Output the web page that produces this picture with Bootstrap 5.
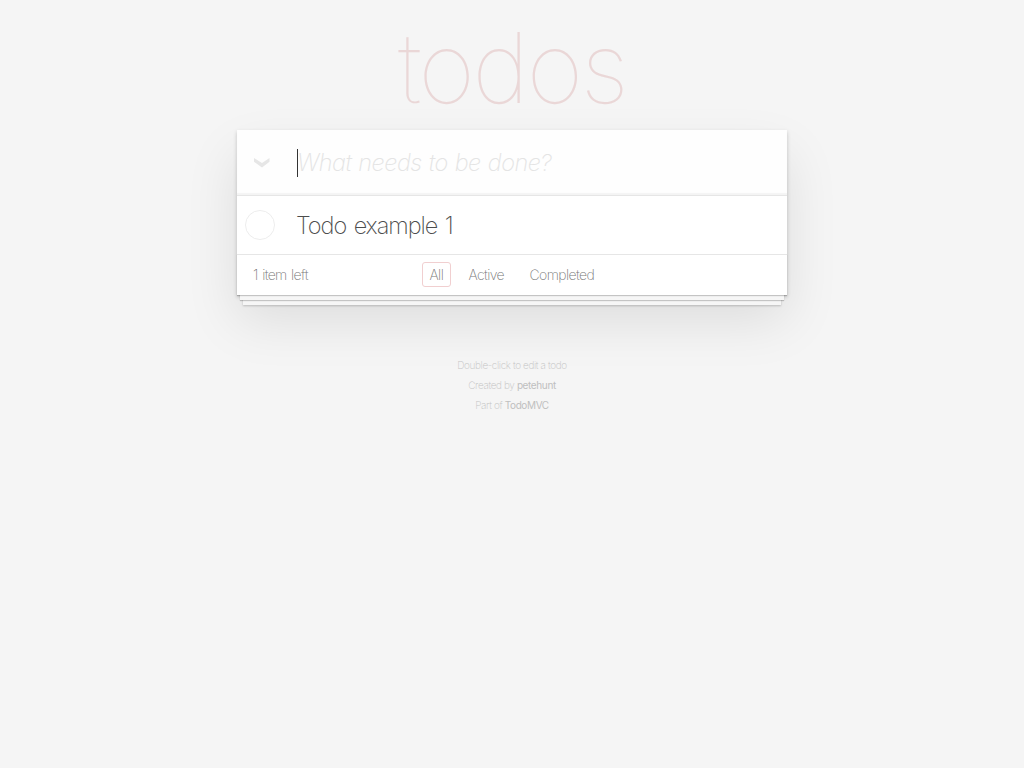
<!DOCTYPE html>
<html lang="en">
<head>
<meta charset="utf-8">
<meta name="viewport" content="width=device-width, initial-scale=1">
<title>todos</title>
<link href="https://cdn.jsdelivr.net/npm/bootstrap@5.3.0/dist/css/bootstrap.min.css" rel="stylesheet">
<style>
body{background:#f5f5f5;color:#4d4d4d;font-family:Inter,"Liberation Sans",sans-serif;font-weight:300;font-size:14px;line-height:1.4}
.todo-shell{width:550px}
.todo-title{height:130px;padding-top:3px;font-size:98px;line-height:130px;font-weight:100;color:#ead7d7;letter-spacing:-2.8px;white-space:nowrap}
.todo-app{box-shadow:0 2px 4px rgba(0,0,0,.2),0 25px 50px rgba(0,0,0,.1)}
.todo-new{height:65px;background:#fefefe;box-shadow:inset 0 -2px 1px rgba(0,0,0,.04)}
.todo-arrow{width:60px;padding-left:17px}
.todo-caret{width:1px;height:28px;margin-right:-1px;background:#333}
.todo-hint{font-size:23.5px;font-style:italic;font-weight:200;color:#e4e4e4;letter-spacing:-.5px;word-spacing:.9px;white-space:nowrap;padding-top:2px}
.todo-item{height:59px;border-top:1px solid #e6e6e6}
.todo-ring{width:60px;padding-left:8px}
.todo-label{font-size:23.5px;font-weight:200;letter-spacing:-1.05px;word-spacing:2px;margin-left:-1px;padding-top:3px}
.todo-foot{height:41px;padding:0 15px;border-top:1px solid #e6e6e6;color:#777;font-weight:200;background:#fff;box-shadow:0 1px 1px rgba(0,0,0,.2),0 8px 0 -3px #f6f6f6,0 9px 1px -3px rgba(0,0,0,.2),0 16px 0 -6px #f6f6f6,0 17px 2px -6px rgba(0,0,0,.2)}
.todo-count{width:169px;margin-left:1px;letter-spacing:-.65px;word-spacing:1.2px}
.todo-filters{gap:10px;margin-top:-2px}
.todo-filter{color:inherit;text-decoration:none;height:25px;line-height:24px;padding:0 6.5px;border:1px solid transparent;border-radius:3px;letter-spacing:-.6px}
.todo-filter.active{width:29px;border-color:#f1cfd0}
.todo-mid{width:51px}
.todo-info{margin-top:60px;font-size:10px;line-height:20px;color:#c4c4c4;font-weight:200;letter-spacing:-.38px}
.todo-info a{color:#bfbfbf;font-weight:400;text-decoration:none}
</style>
</head>
<body>
<main class="todo-shell mx-auto">
<h1 class="todo-title text-center mb-0">todos</h1>
<section class="todo-app bg-white">
<div class="todo-new d-flex align-items-center">
<div class="todo-arrow"><svg class="d-block" width="17" height="11" viewBox="0 0 17 11"><path d="M0 1 8 6 15.5 1V4.8L8 10.4 0 4.8Z" fill="#e6e6e6"/></svg></div>
<span class="todo-caret"></span><span class="todo-hint">What needs to be done?</span>
</div>
<div class="todo-item d-flex align-items-center">
<div class="todo-ring"><svg class="d-block" width="30" height="30"><circle cx="15" cy="15" r="14.5" fill="none" stroke="#ededed"/></svg></div>
<span class="todo-label">Todo example 1</span>
</div>
<footer class="todo-foot d-flex align-items-center position-relative">
<span class="todo-count">1 item left</span>
<nav class="todo-filters d-flex"><a class="todo-filter active" href="#">All</a><a class="todo-filter todo-mid" href="#">Active</a><a class="todo-filter" href="#">Completed</a></nav>
</footer>
</section>
<footer class="todo-info text-center">
<p class="mb-0">Double-click to edit a todo</p>
<p class="mb-0">Created by <a href="#">petehunt</a></p>
<p class="mb-0">Part of <a href="#">TodoMVC</a></p>
</footer>
</main>
<script src="https://cdn.jsdelivr.net/npm/bootstrap@5.3.0/dist/js/bootstrap.bundle.min.js"></script>
</body>
</html>
